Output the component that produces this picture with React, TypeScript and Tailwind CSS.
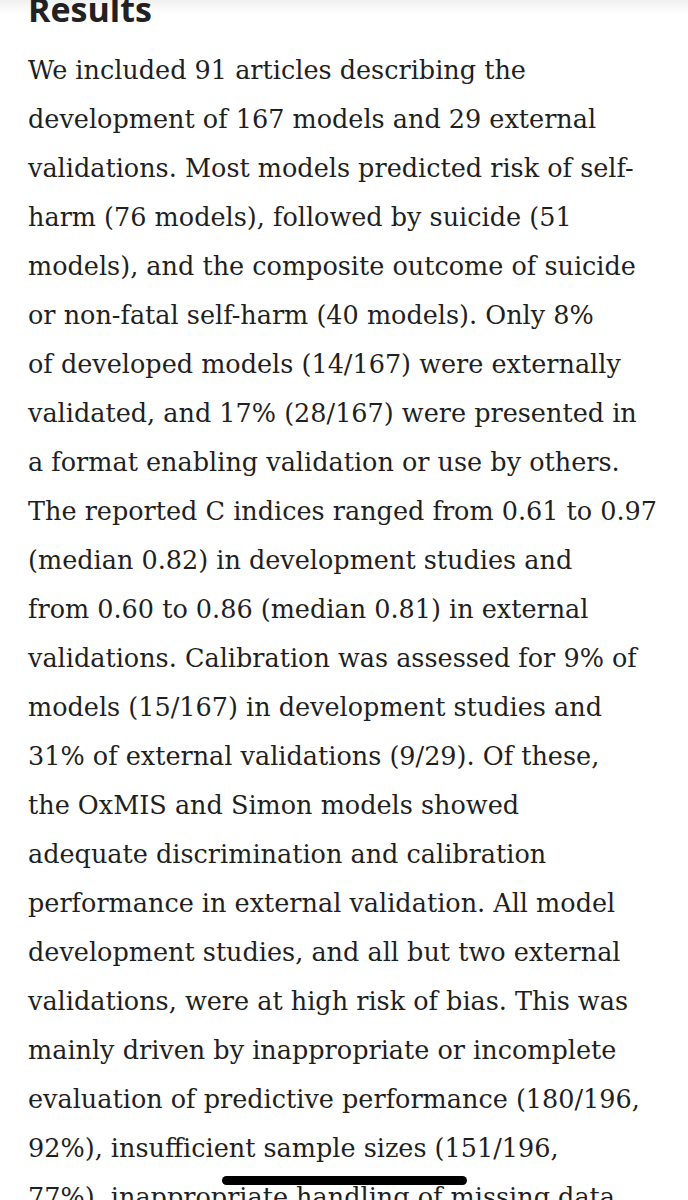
import React from 'react';

const lines = [
    'We included 91 articles describing the',
    'development of 167 models and 29 external',
    'validations. Most models predicted risk of self-',
    'harm (76 models), followed by suicide (51',
    'models), and the composite outcome of suicide',
    'or non-fatal self-harm (40 models). Only 8%',
    'of developed models (14/167) were externally',
    'validated, and 17% (28/167) were presented in',
    'a format enabling validation or use by others.',
    'The reported C indices ranged from 0.61 to 0.97',
    '(median 0.82) in development studies and',
    'from 0.60 to 0.86 (median 0.81) in external',
    'validations. Calibration was assessed for 9% of',
    'models (15/167) in development studies and',
    '31% of external validations (9/29). Of these,',
    'the OxMIS and Simon models showed',
    'adequate discrimination and calibration',
    'performance in external validation. All model',
    'development studies, and all but two external',
    'validations, were at high risk of bias. This was',
    'mainly driven by inappropriate or incomplete',
    'evaluation of predictive performance (180/196,',
    '92%), insufficient sample sizes (151/196,',
    '77%), inappropriate handling of missing data',
];

const App = () => {
    return (
        <div className="relative h-[1200px] overflow-hidden bg-white">
            {/* shadow from the header above */}
            <div className="absolute inset-x-0 top-0 h-[14px] bg-gradient-to-b from-black/[0.06] to-transparent"></div>

            <div className="px-[28px]">
                <h2 className="-mt-[7px] text-[34px] leading-[32px] font-bold text-[#222] [font-family:'Open_Sans',sans-serif]">
                    Results
                </h2>
                <p className="mt-[21px] text-[25.5px] leading-[49px] text-[#1f1f1f] [font-family:'DejaVu_Serif',serif]">
                    {lines.map((line, index) => (
                        <span key={index} className="block whitespace-nowrap">{line}</span>
                    ))}
                </p>
            </div>

            {/* home indicator */}
            <div className="absolute left-[222px] bottom-[15px] h-[9px] w-[245px] rounded-full bg-black"></div>
        </div>
    );
};

export default App;
